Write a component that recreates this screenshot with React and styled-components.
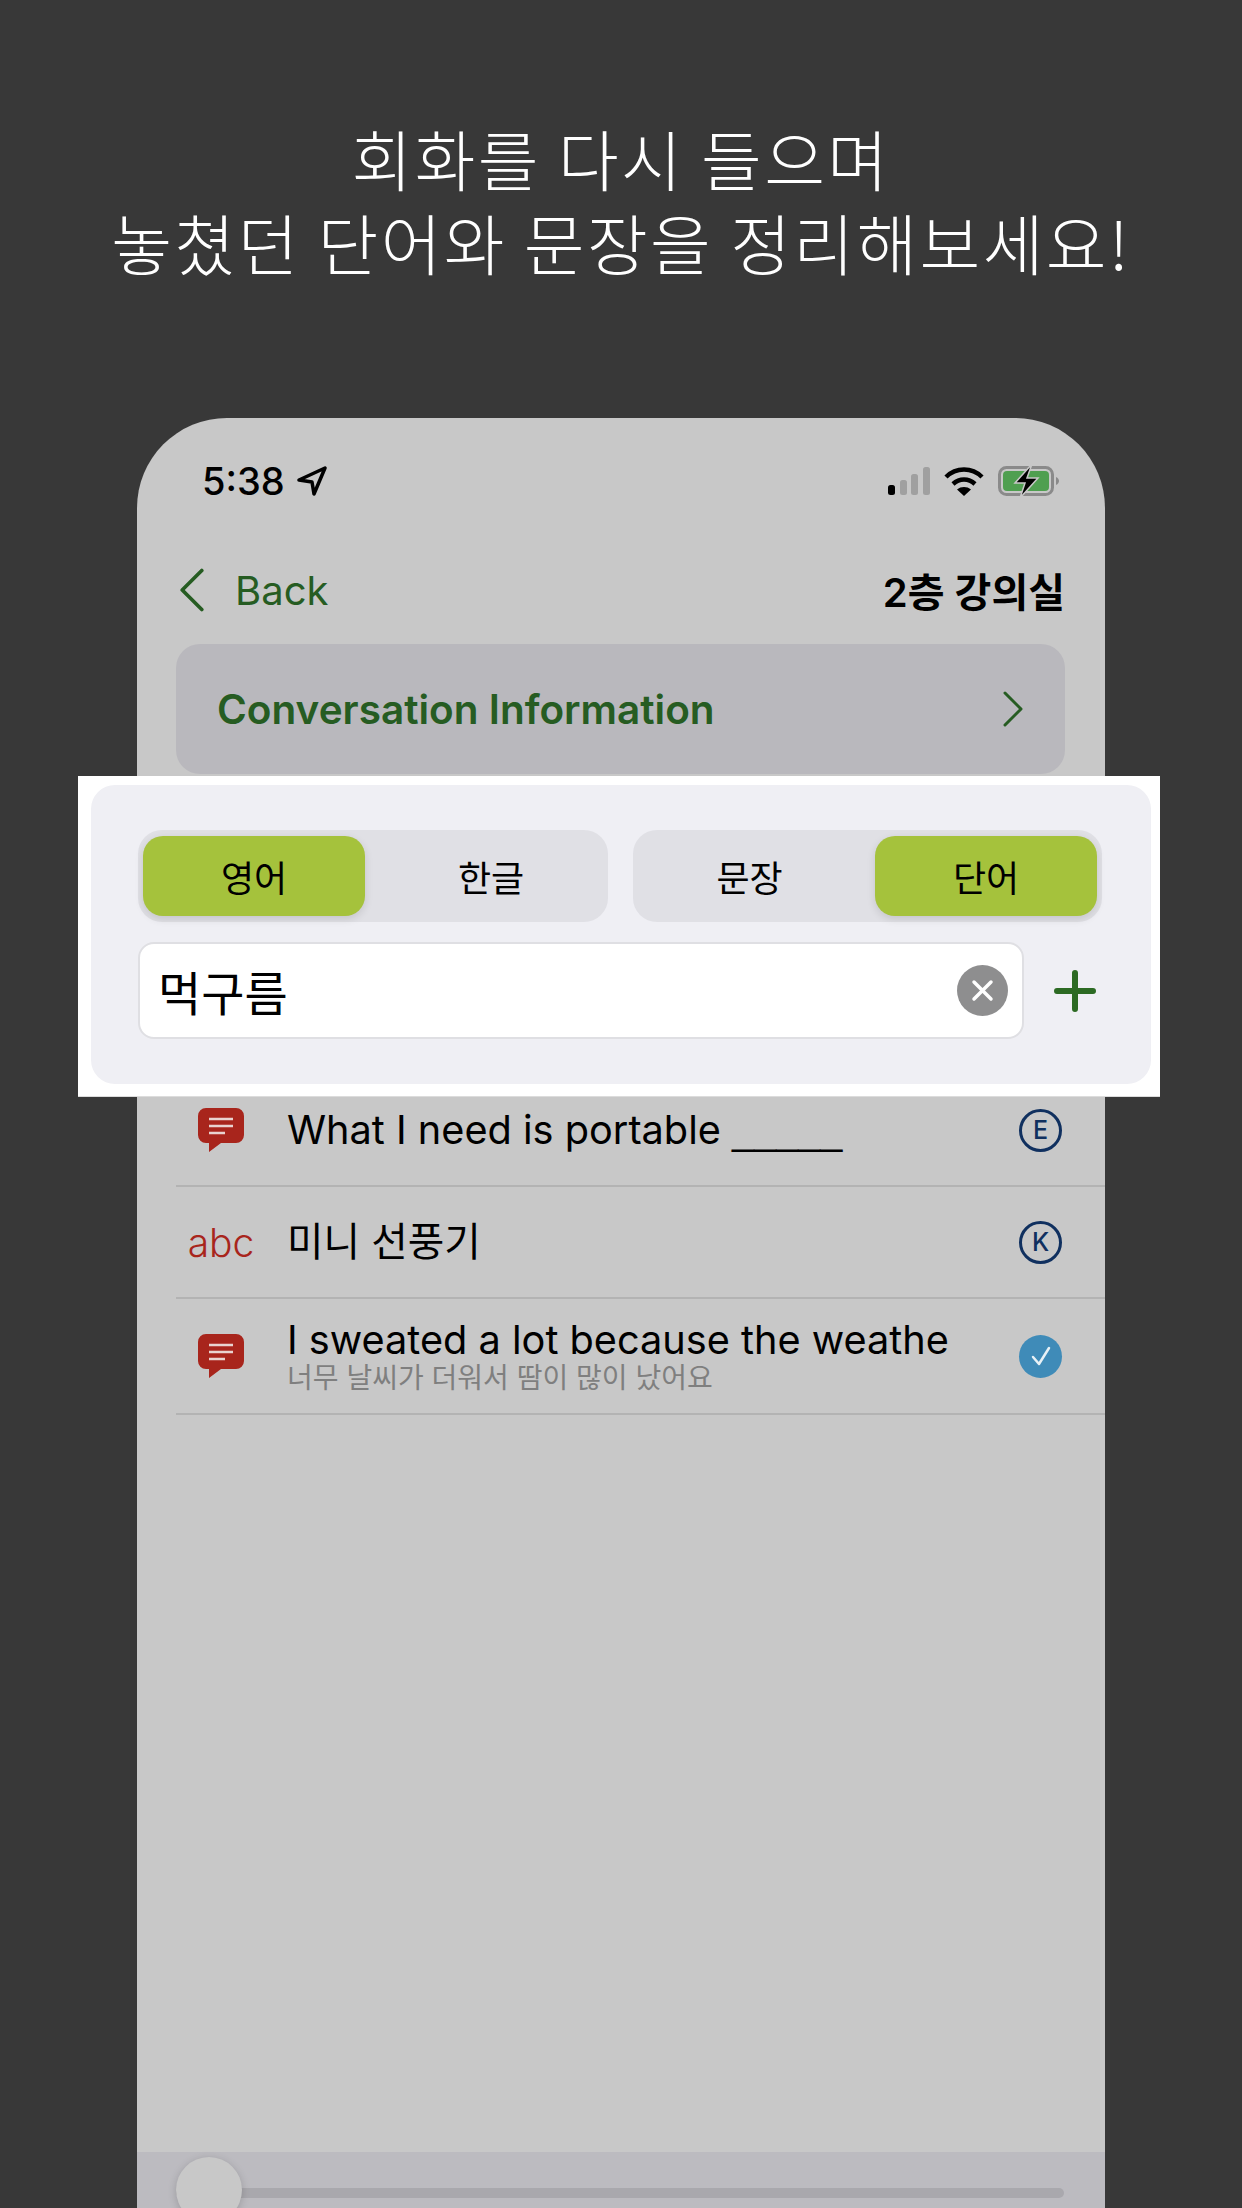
import React from "react";
import styled, { createGlobalStyle } from "styled-components";

const GlobalStyle = createGlobalStyle`
  * { box-sizing: border-box; }
  html, body { margin: 0; padding: 0; background: #383838; }
  body { font-family: Inter, "Noto Sans CJK KR", sans-serif; }
`;

const Page = styled.div`
  position: relative;
  width: 1242px;
  height: 2208px;
  overflow: hidden;
  background: #383838;
  display: flex;
  flex-direction: column;
  padding-top: 115px;
`;

const Headline = styled.h1`
  margin: 0 0 103px;
  height: 200px;
  text-align: center;
  color: #fff;
  font-family: "Noto Sans CJK KR", sans-serif;
  font-size: 66px;
  font-weight: 300;
  line-height: 84px;
  letter-spacing: 2.4px;
`;

const Phone = styled.div`
  flex: 1;
  min-height: 0;
  margin: 0 137px;
  padding: 0 40px 0 39px;
  border-radius: 90px 90px 0 0;
  background: #c8c8c8;
  display: flex;
  flex-direction: column;
`;

const StatusBar = styled.div`
  height: 125px;
  flex: none;
  display: flex;
  align-items: center;
  justify-content: space-between;
  padding: 0 5px 0 26px;
`;

const Clock = styled.div`
  display: flex;
  align-items: center;
  gap: 12px;
  font-size: 38px;
  font-weight: 500;
  color: #000;
`;

const StatusIcons = styled.div`
  display: flex;
  align-items: center;
  gap: 14px;
`;

const NavBar = styled.div`
  height: 94px;
  flex: none;
  display: flex;
  align-items: center;
  justify-content: space-between;
  margin-bottom: 7px;
  padding-left: 3px;
`;

const BackLink = styled.div`
  display: flex;
  align-items: center;
  gap: 30px;
  font-size: 40px;
  color: #265c22;
`;

const NavTitle = styled.div`
  font-size: 40px;
  font-weight: 600;
  color: #000;
`;

const InfoCard = styled.div`
  height: 130px;
  flex: none;
  display: flex;
  align-items: center;
  justify-content: space-between;
  padding: 0 42px 0 41px;
  border-radius: 24px;
  background: #b9b8bd;
  color: #265c22;
  font-size: 40.500px;
  font-weight: 600;
`;

const List = styled.div`
  margin: 301px -40px 0 0;
`;

const Row = styled.div`
  height: ${(p) => p.$height}px;
  display: flex;
  align-items: center;
  padding-right: 43px;
  border-bottom: 2px solid #b3b3b3;
`;

const RowIcon = styled.div`
  width: 90px;
  margin-right: 21px;
  flex: none;
  display: flex;
  justify-content: center;
`;

const Abc = styled.span`
  font-size: 39px;
  font-weight: 300;
  color: #a8251c;
`;

const RowBody = styled.div`
  flex: 1;
  min-width: 0;
`;

const RowTitle = styled.div`
  font-size: 39.700px;
  line-height: 44px;
  color: #000;
  white-space: nowrap;
`;

const Blank = styled.span`
  font-family: "Liberation Sans", sans-serif;
`;

const RowSub = styled.div`
  font-size: 28px;
  line-height: 32px;
  color: #7f7f7f;
  white-space: nowrap;
`;

const Badge = styled.div`
  width: 43px;
  height: 43px;
  flex: none;
  display: flex;
  align-items: center;
  justify-content: center;
  border-radius: 50%;
  border: 3px solid #10305f;
  color: #10305f;
  font-size: 25px;
  font-weight: 500;
`;

const CheckBadge = styled(Badge)`
  border: 0;
  background: #3f8bb8;
`;

const Player = styled.div`
  margin: auto -40px 0 -39px;
  height: 56px;
  flex: none;
  padding: 36px 41px 0 39px;
  background: #bcbbc0;
`;

const Track = styled.div`
  position: relative;
  height: 10px;
  border-radius: 5px;
  background: #a9a8ad;
`;

const Thumb = styled.div`
  position: absolute;
  left: 0;
  top: -31px;
  width: 66px;
  height: 66px;
  border-radius: 50%;
  background: #c8c8c8;
  box-shadow: 0 2px 8px rgba(0, 0, 0, 0.18);
`;

const AddPanel = styled.div`
  position: absolute;
  left: 78px;
  top: 776px;
  width: 1082px;
  height: 321px;
  padding: 9px 9px 12px 13px;
  background: #fff;
  border-bottom: 1px solid #dcdcdc;
`;

const PanelInner = styled.div`
  height: 100%;
  padding: 45px 49px 0 47px;
  border-radius: 24px;
  background: #efeff4;
`;

const Toggles = styled.div`
  display: grid;
  grid-template-columns: 470px 469px;
  justify-content: space-between;
  margin-bottom: 20px;
`;

const Segment = styled.div`
  height: 92px;
  padding: 6px 5px;
  display: flex;
  border-radius: 24px;
  background: #e0e0e5;
`;

const SegmentItem = styled.div`
  flex: ${(p) => (p.$active ? "0 0 222px" : "1")};
  display: flex;
  align-items: center;
  justify-content: center;
  padding: ${(p) => (p.$active ? "0" : p.$pad)};
  border-radius: 20px;
  background: ${(p) => (p.$active ? "#a5c23c" : "transparent")};
  box-shadow: ${(p) => (p.$active ? "0 3px 8px rgba(0,0,0,0.12)" : "none")};
  font-size: 36px;
  color: #000;
`;

const InputRow = styled.div`
  display: flex;
  align-items: center;
  gap: 30px;
`;

const WordInput = styled.div`
  width: 886px;
  height: 97px;
  flex: none;
  display: flex;
  align-items: center;
  justify-content: space-between;
  padding: 0 14px 0 18px;
  border: 2px solid #dfdfe3;
  border-radius: 16px;
  background: #fff;
  font-size: 47px;
  color: #000;
`;

const ChatIcon = () => (
  <svg width="46" height="44" viewBox="0 0 46 44">
    <path d="M8 0h30a8 8 0 0 1 8 8v19a8 8 0 0 1-8 8H23L11 44v-9H8a8 8 0 0 1-8-8V8a8 8 0 0 1 8-8z" fill="#a8251c" />
    <path d="M11 11h24M11 18h24M11 25h16" stroke="#e9d3d0" strokeWidth="2.5" />
  </svg>
);

const Chevron = ({ left, width, height, strokeWidth = 3 }) => (
  <svg width={width} height={height} viewBox="0 0 20 36" fill="none" stroke="#265c22" strokeWidth={strokeWidth} strokeLinecap="round" strokeLinejoin="round">
    <path d={left ? "M18 2L2 18l16 16" : "M2 2l16 16L2 34"} />
  </svg>
);

const Signal = () => (
  <svg width="42" height="28" viewBox="0 0 42 28">
    <rect x="0" y="18" width="7" height="10" rx="2.5" fill="#000" />
    <rect x="12" y="13" width="7" height="15" rx="2.5" fill="#a0a0a0" />
    <rect x="23" y="7" width="7" height="21" rx="2.5" fill="#a0a0a0" />
    <rect x="35" y="0" width="7" height="28" rx="2.5" fill="#a0a0a0" />
  </svg>
);

const Wifi = () => (
  <svg width="40" height="30" viewBox="0 0 40 30" fill="none" stroke="#000" strokeWidth="4.5">
    <path d="M2 11C12 1 28 1 38 11" />
    <path d="M9 18c6.500-6 15.500-6 22 0" />
    <path d="M20 30l-7-6.500c4-3.300 10-3.300 14 0z" fill="#000" stroke="none" />
  </svg>
);

const Battery = () => (
  <svg width="62" height="34" viewBox="0 0 62 34">
    <rect x="1.500" y="3.500" width="53" height="27" rx="7" fill="none" stroke="#8a8a8a" strokeWidth="3" />
    <rect x="5" y="7" width="46" height="20" rx="4" fill="#4f9f50" />
    <path d="M58 13c2 1 3 2.500 3 4s-1 3-3 4z" fill="#8a8a8a" />
    <path d="M34 0L17 19h10l-5 15 18-20H29z" fill="#000" stroke="#c8c8c8" strokeWidth="1.500" />
  </svg>
);

const LocationArrow = () => (
  <svg width="30" height="30" viewBox="0 0 30 30" fill="none" stroke="#000" strokeWidth="3.500" strokeLinejoin="round">
    <path d="M2 14L28 2 17 28l-2-12z" />
  </svg>
);

const ClearIcon = () => (
  <svg width="51" height="51" viewBox="0 0 51 51">
    <circle cx="25.500" cy="25.500" r="25.500" fill="#8e8e8f" />
    <path d="M17 17l17 17M34 17L17 34" stroke="#fff" strokeWidth="3.500" strokeLinecap="round" />
  </svg>
);

const PlusIcon = () => (
  <svg width="42" height="42" viewBox="0 0 42 42">
    <path d="M21 3v36M3 21h36" stroke="#2c6a23" strokeWidth="6" strokeLinecap="round" />
  </svg>
);

const CheckIcon = () => (
  <svg width="26" height="26" viewBox="0 0 26 26" fill="none">
    <path d="M5 14l6 7L21 5" stroke="#e8f1f6" strokeWidth="2.500" strokeLinecap="round" strokeLinejoin="round" />
  </svg>
);

export default function App() {
  return (
    <Page>
      <GlobalStyle />
      <Headline>
        회화를 다시 들으며
        <br />
        놓쳤던 단어와 문장을 정리해보세요!
      </Headline>

      <Phone>
        <StatusBar>
          <Clock>
            5:38
            <LocationArrow />
          </Clock>
          <StatusIcons>
            <Signal />
            <Wifi />
            <Battery />
          </StatusIcons>
        </StatusBar>

        <NavBar>
          <BackLink>
            <Chevron left width={26} height={44} />
            Back
          </BackLink>
          <NavTitle>2층 강의실</NavTitle>
        </NavBar>

        <InfoCard>
          Conversation Information
          <Chevron width={20} height={36} />
        </InfoCard>

        <List>
          <Row $height={112}>
            <RowIcon>
              <ChatIcon />
            </RowIcon>
            <RowBody>
              <RowTitle>
                What I need is portable <Blank>_____</Blank>
              </RowTitle>
            </RowBody>
            <Badge>E</Badge>
          </Row>
          <Row $height={112}>
            <RowIcon>
              <Abc>abc</Abc>
            </RowIcon>
            <RowBody>
              <RowTitle>미니 선풍기</RowTitle>
            </RowBody>
            <Badge>K</Badge>
          </Row>
          <Row $height={116}>
            <RowIcon>
              <ChatIcon />
            </RowIcon>
            <RowBody>
              <RowTitle>I sweated a lot because the weathe</RowTitle>
              <RowSub>너무 날씨가 더워서 땀이 많이 났어요</RowSub>
            </RowBody>
            <CheckBadge>
              <CheckIcon />
            </CheckBadge>
          </Row>
        </List>

        <Player>
          <Track>
            <Thumb />
          </Track>
        </Player>
      </Phone>

      <AddPanel>
        <PanelInner>
          <Toggles>
            <Segment>
              <SegmentItem $active>영어</SegmentItem>
              <SegmentItem $pad="0 0 0 14px">한글</SegmentItem>
            </Segment>
            <Segment>
              <SegmentItem $pad="0 14px 0 0">문장</SegmentItem>
              <SegmentItem $active>단어</SegmentItem>
            </Segment>
          </Toggles>
          <InputRow>
            <WordInput>
              먹구름
              <ClearIcon />
            </WordInput>
            <PlusIcon />
          </InputRow>
        </PanelInner>
      </AddPanel>
    </Page>
  );
}
